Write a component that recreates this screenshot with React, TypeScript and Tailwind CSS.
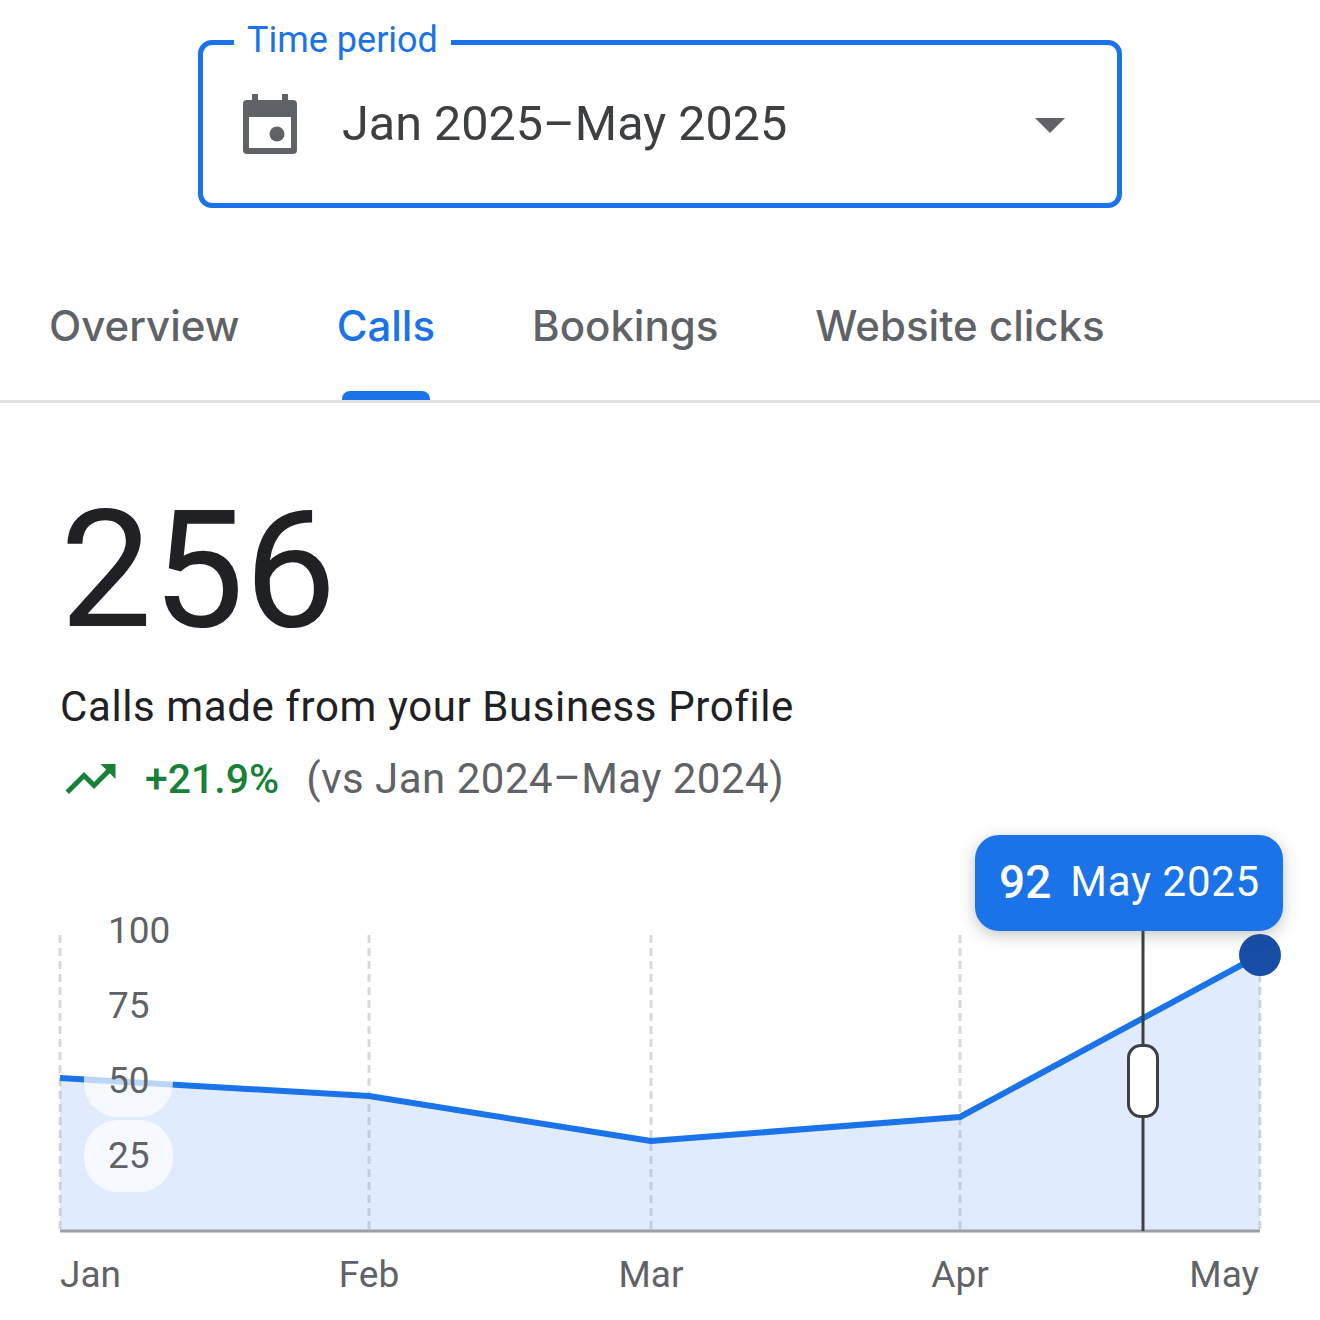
const tabs = ["Overview", "Calls", "Bookings", "Website clicks"];

// chart lives on its own canvas, y is measured from the top of the chart block
const points = [
  [60, 248],
  [369, 266],
  [651, 311],
  [960, 287],
  [1260, 125],
];
const gridX = [60, 369, 651, 960, 1260];
const yLabels = [
  { text: "100", top: 76 },
  { text: "75", top: 151 },
  { text: "50", top: 226 },
  { text: "25", top: 301 },
];
const xLabels = [
  { text: "Jan", className: "left-[60px]" },
  { text: "Feb", className: "left-[369px] -translate-x-1/2" },
  { text: "Mar", className: "left-[651px] -translate-x-1/2" },
  { text: "Apr", className: "left-[960px] -translate-x-1/2" },
  { text: "May", className: "right-[61px]" },
];

function CalendarIcon() {
  return (
    <svg width="54" height="60" viewBox="0 0 54 60">
      <rect x="9" y="0" width="6" height="8" fill="#5f6368" />
      <rect x="39" y="0" width="6" height="8" fill="#5f6368" />
      <rect x="0" y="6" width="54" height="54" rx="4" fill="#5f6368" />
      <rect x="6" y="23" width="42" height="31" fill="#ffffff" />
      <circle cx="34" cy="40" r="7.5" fill="#5f6368" />
    </svg>
  );
}

function TrendIcon() {
  return (
    <svg width="51" height="30" viewBox="2 6 20 12" fill="#188038">
      <path d="M16 6l2.29 2.29-4.88 4.88-4-4L2 16.59 3.41 18l6-6 4 4 6.3-6.29L22 12V6z" />
    </svg>
  );
}

function Chart() {
  const line = points.map((p) => p.join(",")).join(" ");
  return (
    <div className="relative mt-[26px] h-[490px]">
      <svg className="absolute inset-0" width="1320" height="490" viewBox="0 0 1320 490">
        <polygon points={`60,401 ${line} 1260,401`} fill="#e0ecfd" />
        {gridX.map((x) => (
          <line key={x} x1={x} y1="105" x2={x} y2="400" stroke="#9aa0a6" strokeOpacity="0.4" strokeWidth="3" strokeDasharray="8 5" />
        ))}
        <line x1="60" y1="401" x2="1260" y2="401" stroke="#9aa0a6" strokeWidth="3" />
        <polyline points={line} fill="none" stroke="#1a73e8" strokeWidth="6" strokeLinejoin="round" />
        <line x1="1143" y1="100" x2="1143" y2="401" stroke="#3c4043" strokeWidth="3" />
        <circle cx="1260" cy="125" r="21" fill="#174ea6" />
      </svg>

      {/* pills behind the y labels */}
      <div className="absolute left-[84px] top-[215px] h-[72px] w-[89px] rounded-[34px] bg-white/70" />
      <div className="absolute left-[84px] top-[290px] h-[72px] w-[89px] rounded-[34px] bg-white/70" />

      {yLabels.map((l) => (
        <span key={l.text} className="absolute left-[108px] text-[37px] leading-[50px] text-[#5f6368]" style={{ top: l.top }}>
          {l.text}
        </span>
      ))}

      {/* drag handle on the cursor line */}
      <div className="absolute left-[1127px] top-[214px] h-[74px] w-[32px] rounded-[14px] border-[3px] border-[#3c4043] bg-white" />

      {/* tooltip */}
      <div className="absolute left-[975px] top-[5px] flex h-[96px] w-[308px] items-center gap-[19px] rounded-[24px] bg-[#1a73e8] pb-[2px] pl-[24px] text-white shadow-[0_4px_16px_rgba(60,64,67,0.3)]">
        <span className="text-[46px] font-medium leading-none">92</span>
        <span className="text-[42px] leading-none tracking-[0.7px]">May 2025</span>
      </div>

      {xLabels.map((l) => (
        <span key={l.text} className={`absolute top-[420px] text-[37px] leading-[50px] text-[#5f6368] ${l.className}`}>
          {l.text}
        </span>
      ))}
    </div>
  );
}

export default function App() {
  return (
    <div className="h-[1320px] w-[1320px] overflow-hidden bg-white font-[Roboto,sans-serif]">
      {/* Time period field */}
      <div className="px-[198px] pt-[40px]">
        <div className="relative flex h-[168px] items-center rounded-[14px] border-[5px] border-[#1a73e8] pl-[40px] pr-[52px]">
          <span className="absolute -top-[26px] left-[31px] bg-white px-[13px] text-[36px] leading-[42px] text-[#1a73e8]">
            Time period
          </span>
          <CalendarIcon />
          <span className="ml-[45px] flex-1 text-[48.5px] leading-none text-[#3c4043]">Jan 2025–May 2025</span>
          <div className="mt-[2px] h-0 w-0 border-x-[15px] border-t-[15px] border-x-transparent border-t-[#5f6368]" />
        </div>
      </div>

      {/* Tabs */}
      <div className="mt-[62px] flex h-[133px] gap-[97px] border-b-[3px] border-[#e0e0e0] pl-[49px]">
        {tabs.map((tab) => (
          <div key={tab} className="relative flex h-[130px] items-center pb-[18px]">
            <span className={`font-[Inter,sans-serif] text-[42px] font-medium leading-none ${tab === "Calls" ? "text-[#1a73e8]" : "text-[#5f6368]"}`}>
              {tab}
            </span>
            {tab === "Calls" && (
              <div className="absolute bottom-0 left-[5px] right-[5px] h-[9px] rounded-t-[8px] bg-[#1a73e8]" />
            )}
          </div>
        ))}
      </div>

      {/* Summary */}
      <div className="pl-[60px] pt-[85px]">
        <div className="text-[164px] leading-[164px] text-[#202124]">256</div>
        <div className="mt-[30px] text-[42px] leading-[50px] tracking-[0.6px] text-[#202124]">Calls made from your Business Profile</div>
        <div className="mt-[22px] flex h-[50px] items-center">
          <div className="ml-[5px] flex">
            <TrendIcon />
          </div>
          <span className="ml-[29px] text-[41px] font-medium leading-none text-[#188038]">+21.9%</span>
          <span className="ml-[27px] text-[42px] leading-none tracking-[0.5px] text-[#5f6368]">(vs Jan 2024–May 2024)</span>
        </div>
      </div>

      <Chart />
    </div>
  );
}
